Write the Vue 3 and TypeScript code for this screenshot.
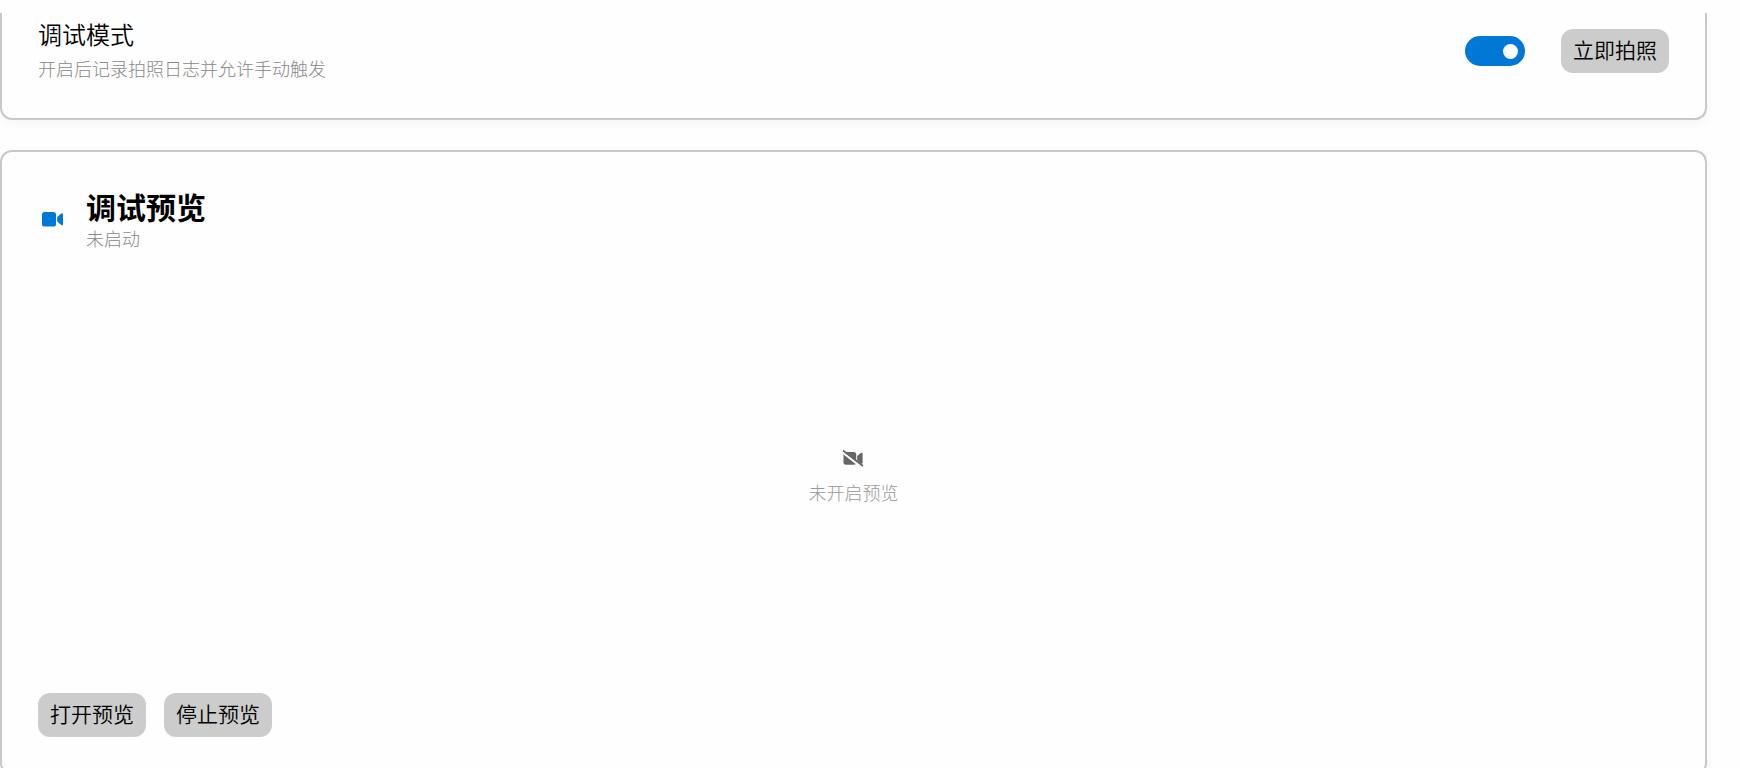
<script setup lang="ts">
import { computed, ref } from 'vue'

const debugMode = ref(true)
const previewing = ref(false)

const statusText = computed(() => (previewing.value ? '预览中' : '未启动'))
</script>

<template>
  <main class="settings">
    <section class="card card-continued">
      <div class="setting-row">
        <div class="setting-text">
          <label class="setting-title" for="debug-mode">调试模式</label>
          <span id="debug-hint" class="hint">开启后记录拍照日志并允许手动触发</span>
        </div>
        <div class="setting-controls">
          <input
            id="debug-mode"
            v-model="debugMode"
            class="switch"
            type="checkbox"
            role="switch"
            aria-describedby="debug-hint"
          />
          <button class="btn" type="button" :disabled="!debugMode">立即拍照</button>
        </div>
      </div>
    </section>

    <section class="card">
      <header class="card-header">
        <svg class="icon icon-accent" viewBox="0 0 30 30" aria-hidden="true">
          <rect x="4" y="8" width="14" height="14.5" rx="2.6" />
          <path d="M19.2 13 22.6 10Q25 8.2 25 10.6V20Q25 22.2 22.6 20.4L19.2 17.4Z" />
        </svg>
        <div>
          <h2 class="card-title">调试预览</h2>
          <span class="hint">{{ statusText }}</span>
        </div>
      </header>

      <div class="preview">
        <template v-if="!previewing">
          <svg class="icon icon-muted" viewBox="0 0 30 30" aria-hidden="true">
            <path d="M7 9H14.7Q17.2 9 17.2 11.5V19.2Q17.2 21.7 14.7 21.7H7Q4.5 21.7 4.5 19.2V11.5Q4.5 9 7 9Z" />
            <path d="M18.2 13 21.4 10.3Q23.6 8.8 23.6 11V19.5Q23.6 21.7 21.4 20.2L18.2 17.5Z" />
            <path class="slash-gap" d="M3.2 9 23.2 24.6" />
            <path class="slash" d="M4 7.5 24 23" />
          </svg>
          <span class="hint">未开启预览</span>
        </template>
      </div>

      <div class="actions">
        <button class="btn" type="button" @click="previewing = true">打开预览</button>
        <button class="btn" type="button" @click="previewing = false">停止预览</button>
      </div>
    </section>
  </main>
</template>

<style>
body {
  margin: 0;
  background: #fefefe;
}
</style>

<style scoped>
.settings {
  box-sizing: border-box;
  height: calc(100vh - 13px);
  margin-top: 13px;
  padding-right: 33px;
  overflow: hidden;
  display: flex;
  flex-direction: column;
  gap: 30px;
  color: #000;
  font-family: "Noto Sans CJK SC", sans-serif;
  font-weight: 300;
}

.card {
  flex: none;
  padding: 35px 36px 36px;
  border: 2px solid #c8c8c8;
  border-radius: 12px;
  background: #fefefe;
  box-shadow: 0 3px 12px rgba(0, 0, 0, 0.04);
}

.card-continued {
  padding-top: 5px;
  padding-bottom: 34px;
  border-top: 0;
  border-radius: 0 0 12px 12px;
}

.setting-row {
  display: flex;
  align-items: center;
  justify-content: space-between;
}

.setting-text {
  display: flex;
  flex-direction: column;
  gap: 6px;
  padding-bottom: 4px;
}

.setting-title {
  font-size: 24px;
  line-height: 32px;
  font-weight: 350;
}

.hint {
  display: block;
  color: #888;
  font-size: 18px;
  line-height: 24px;
}

.setting-controls {
  display: flex;
  align-items: center;
  gap: 36px;
}

.switch {
  appearance: none;
  display: flex;
  align-items: center;
  box-sizing: border-box;
  width: 60px;
  height: 30px;
  margin: 0;
  padding: 0 7px;
  border-radius: 15px;
  background: #999;
  cursor: pointer;
}

.switch::before {
  content: "";
  width: 15px;
  height: 15px;
  border-radius: 50%;
  background: #fff;
}

.switch:checked {
  justify-content: flex-end;
  background: #0078d7;
}

.btn {
  height: 44px;
  padding: 0 12px 4px;
  border: 0;
  border-radius: 12px;
  background: #ccc;
  color: #000;
  font: inherit;
  font-size: 21px;
  font-weight: 350;
  line-height: 30px;
  cursor: pointer;
}

.card-header {
  display: flex;
  align-items: center;
  gap: 18px;
}

.card-title {
  margin: 0;
  font-size: 30px;
  line-height: 39px;
  font-weight: 700;
}

.icon {
  display: block;
  width: 30px;
  height: 30px;
}

.icon-accent {
  fill: #0078d7;
}

.icon-muted {
  fill: #666;
}

.slash,
.slash-gap {
  fill: none;
}

.slash {
  stroke: #666;
  stroke-width: 1.6;
}

.slash-gap {
  stroke: #fefefe;
  stroke-width: 2.4;
}

.preview {
  display: flex;
  flex-direction: column;
  align-items: center;
  justify-content: center;
  gap: 7px;
  height: 396px;
  margin-top: 25px;
}

.preview .hint {
  color: #999;
}

.actions {
  display: flex;
  gap: 18px;
  margin-top: 22px;
}
</style>
